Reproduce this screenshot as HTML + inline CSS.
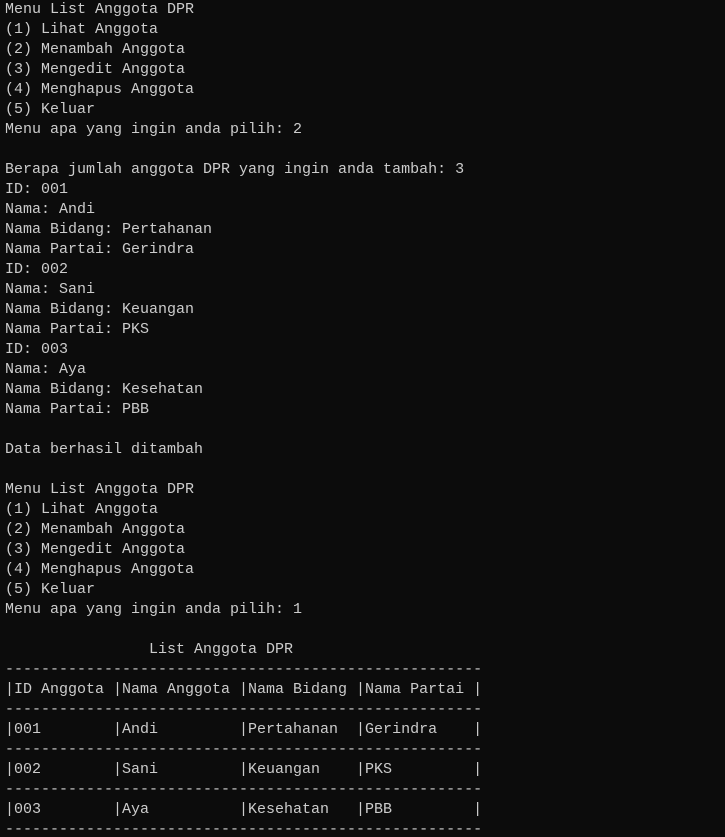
<!DOCTYPE html>
<html><head><meta charset="utf-8"><style>
html,body{margin:0;padding:0;background:#0c0c0c;width:725px;height:837px;overflow:hidden}
pre{margin:0;padding:0 0 0 5px;font-family:"Liberation Mono",monospace;font-size:15px;line-height:20px;color:#cccccc}
</style></head><body><pre>Menu List Anggota DPR
(1) Lihat Anggota
(2) Menambah Anggota
(3) Mengedit Anggota
(4) Menghapus Anggota
(5) Keluar
Menu apa yang ingin anda pilih: 2

Berapa jumlah anggota DPR yang ingin anda tambah: 3
ID: 001
Nama: Andi
Nama Bidang: Pertahanan
Nama Partai: Gerindra
ID: 002
Nama: Sani
Nama Bidang: Keuangan
Nama Partai: PKS
ID: 003
Nama: Aya
Nama Bidang: Kesehatan
Nama Partai: PBB

Data berhasil ditambah

Menu List Anggota DPR
(1) Lihat Anggota
(2) Menambah Anggota
(3) Mengedit Anggota
(4) Menghapus Anggota
(5) Keluar
Menu apa yang ingin anda pilih: 1

                List Anggota DPR
-----------------------------------------------------
|ID Anggota |Nama Anggota |Nama Bidang |Nama Partai |
-----------------------------------------------------
|001        |Andi         |Pertahanan  |Gerindra    |
-----------------------------------------------------
|002        |Sani         |Keuangan    |PKS         |
-----------------------------------------------------
|003        |Aya          |Kesehatan   |PBB         |
-----------------------------------------------------</pre></body></html>
